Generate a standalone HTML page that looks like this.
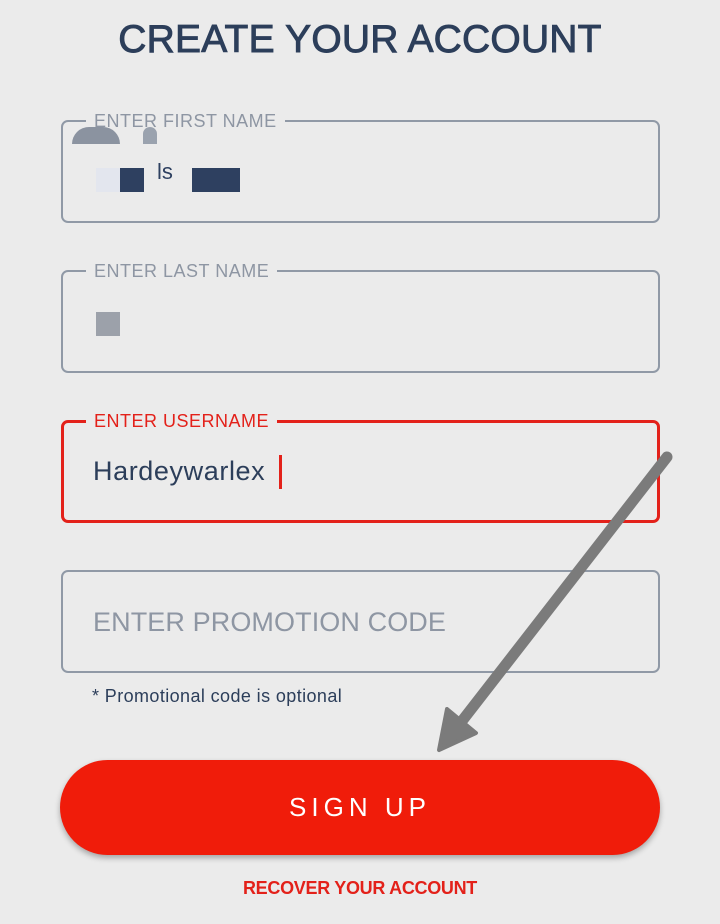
<!DOCTYPE html>
<html><head><style>
body{margin:0;width:720px;height:924px;background:#ebebeb;font-family:"Liberation Sans",sans-serif;position:relative;overflow:hidden}
.t{position:absolute;left:0;width:720px;top:18px;text-align:center;font-size:39px;font-weight:normal;color:#2c3e5a;letter-spacing:0.2px;-webkit-text-stroke:0.9px #2c3e5a}
.f{position:absolute;left:61px;width:599px;height:100px;border:2px solid #9099a6;border-radius:7px;box-sizing:border-box}
.l{position:absolute;left:23px;top:-12px;padding:0 8px;background:#ebebeb;font-size:18px;color:#8e96a3;letter-spacing:0.5px;line-height:22px}
.foc{border:3px solid #e3211a}
.foc .l{color:#e3211a;left:22px;top:-13px}
.b{position:absolute;background:#2e4060}
</style></head><body>
<div class="t">CREATE YOUR ACCOUNT</div>

<div class="f" style="top:120px;height:103px"><div class="l">ENTER FIRST NAME</div></div>
<div style="position:absolute;left:72px;top:127px;width:48px;height:17px;background:#8b93a0;border-radius:24px 24px 0 0"></div>
<div style="position:absolute;left:143px;top:127px;width:14px;height:17px;background:#9aa2ae;border-radius:14px 14px 0 0"></div>
<div class="b" style="left:96px;top:168px;width:24px;height:24px;background:#e3e6ee"></div>
<div class="b" style="left:120px;top:168px;width:24px;height:24px"></div>
<div style="position:absolute;left:157px;top:159px;font-size:22px;color:#2e4060">ls</div>
<div class="b" style="left:192px;top:168px;width:48px;height:24px"></div>

<div class="f" style="top:270px;height:103px"><div class="l">ENTER LAST NAME</div></div>
<div class="b" style="left:96px;top:312px;width:24px;height:24px;background:#9ca1aa"></div>

<div class="f foc" style="top:420px;height:103px"><div class="l">ENTER USERNAME</div>
<div style="position:absolute;left:29px;top:33px;font-size:27px;color:#2c3e5a;letter-spacing:0.6px">Hardeywarlex</div>
<div style="position:absolute;left:215px;top:32px;width:3px;height:34px;background:#e3211a"></div></div>

<div class="f" style="top:570px;height:103px">
<div style="position:absolute;left:30px;top:35px;font-size:27px;color:#8e96a3;letter-spacing:0.1px">ENTER PROMOTION CODE</div></div>
<div style="position:absolute;left:92px;top:686px;font-size:18px;color:#2c3e5a;letter-spacing:0.4px">* Promotional code is optional</div>

<div style="position:absolute;left:60px;top:760px;width:600px;height:95px;border-radius:48px;background:#f01c0a;box-shadow:0 3px 6px rgba(0,0,0,0.3);color:#fff;font-size:26px;letter-spacing:5px;text-align:center;line-height:95px">SIGN UP</div>
<div style="position:absolute;left:0;width:720px;top:878px;text-align:center;font-size:18px;font-weight:bold;color:#e3211a;letter-spacing:-0.3px">RECOVER YOUR ACCOUNT</div>

<svg style="position:absolute;left:0;top:0" width="720" height="924">
<line x1="667" y1="457" x2="455" y2="730" stroke="#7b7b7b" stroke-width="11" stroke-linecap="round"/>
<polygon points="439,750 447,709 476,733" fill="#7b7b7b" stroke="#7b7b7b" stroke-width="4" stroke-linejoin="round"/>
</svg>
</body></html>
